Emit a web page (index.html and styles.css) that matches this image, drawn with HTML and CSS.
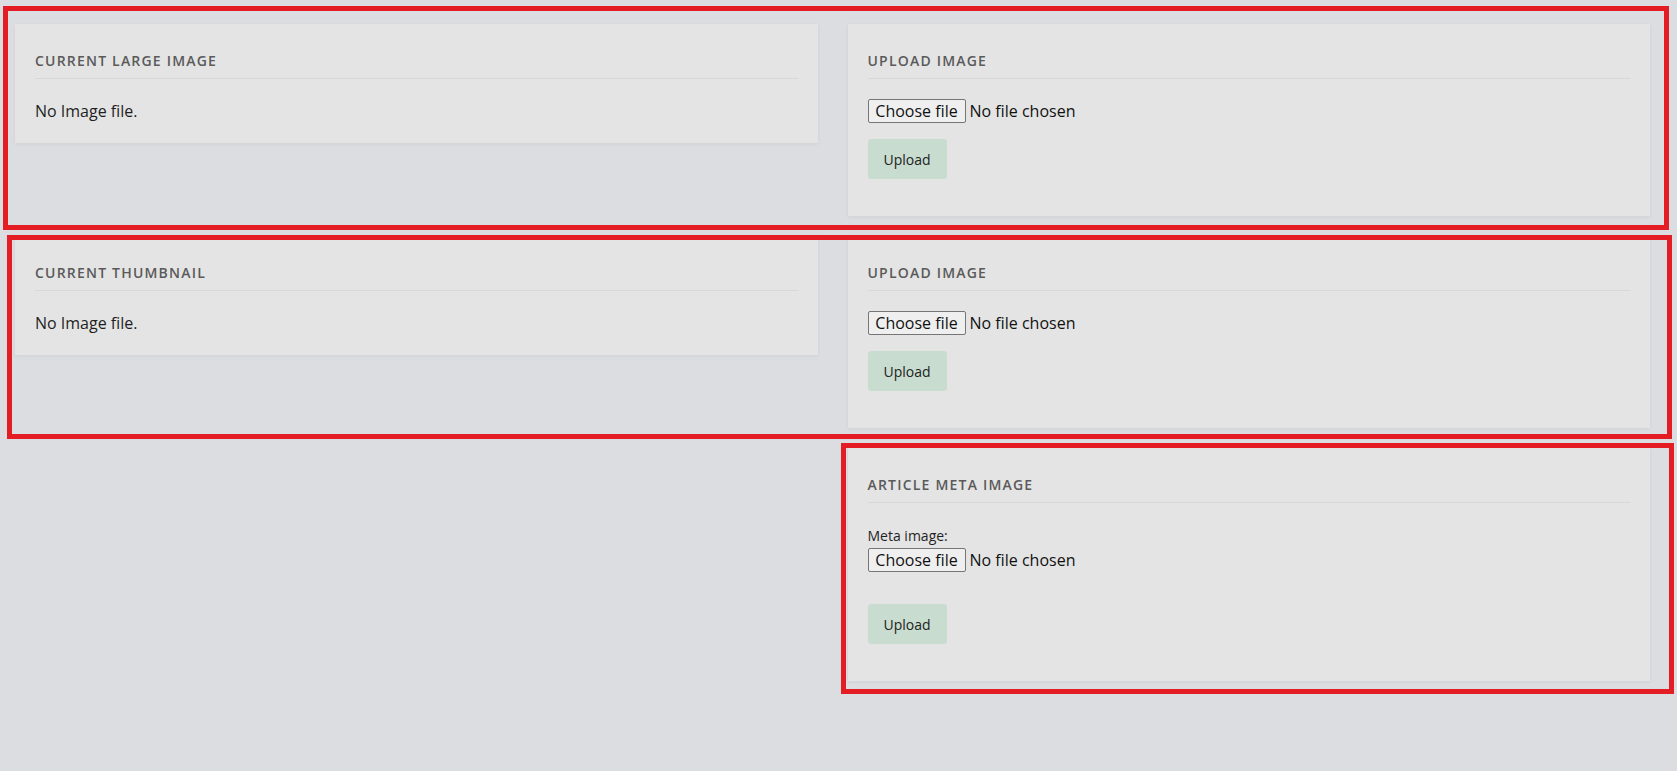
FILE: index.html
```html
<!DOCTYPE html>
<html lang="en">
<head>
<meta charset="utf-8">
<title>Article images</title>
<link rel="stylesheet" href="styles.css">
</head>
<body>
<main class="page">
  <section class="grid">
    <div class="card card-short">
      <h5 class="card-title">Current large image</h5>
      <p class="card-text">No Image file.</p>
    </div>
    <div class="card">
      <h5 class="card-title">Upload image</h5>
      <form class="upload-form">
        <div class="file-input">
          <button type="button" class="file-btn">Choose file</button>
          <span class="file-name">No file chosen</span>
        </div>
        <button type="button" class="btn-upload">Upload</button>
      </form>
    </div>

    <div class="card card-short">
      <h5 class="card-title">Current thumbnail</h5>
      <p class="card-text">No Image file.</p>
    </div>
    <div class="card">
      <h5 class="card-title">Upload image</h5>
      <form class="upload-form">
        <div class="file-input">
          <button type="button" class="file-btn">Choose file</button>
          <span class="file-name">No file chosen</span>
        </div>
        <button type="button" class="btn-upload">Upload</button>
      </form>
    </div>

    <div class="card card-col2">
      <h5 class="card-title">Article meta image</h5>
      <form class="upload-form">
        <div class="form-group">
          <label class="field-label">Meta image:</label>
          <div class="file-input">
            <button type="button" class="file-btn">Choose file</button>
            <span class="file-name">No file chosen</span>
          </div>
        </div>
        <button type="button" class="btn-upload">Upload</button>
      </form>
    </div>
  </section>

  <div class="mark mark-1"></div>
  <div class="mark mark-2"></div>
  <div class="mark mark-3"></div>
</main>
</body>
</html>
```

FILE: styles.css
```css
* { box-sizing: border-box; }

html, body {
  margin: 0;
  padding: 0;
  background: #dcdde1;
}

body {
  font-family: "Open Sans", "Liberation Sans", sans-serif;
  color: #1f1f1f;
  width: 1677px;
  height: 771px;
  overflow: hidden;
}

.page {
  position: relative;
  padding: 24px 27px 0 15px;
}

.grid {
  display: grid;
  grid-template-columns: 1fr 1fr;
  column-gap: 30px;
  row-gap: 20px;
  align-items: start;
}

.card {
  background: #e4e4e4;
  padding: 20px;
  box-shadow: 0 1px 4px rgba(0, 0, 0, 0.06);
}

.card-col2 {
  grid-column: 2;
}

.card-title {
  margin: 0 0 20px;
  padding: 7px 0 7px;
  border-bottom: 1px solid #d8d8d8;
  font-size: 14px;
  line-height: 20px;
  font-weight: 600;
  letter-spacing: 1.2px;
  text-transform: uppercase;
  color: #5a5a5a;
}

.card-text {
  margin: 0;
  font-size: 16px;
  line-height: 24px;
  color: #1f1f1f;
}

.upload-form {
  margin: 0 0 17px;
}

.file-input {
  display: flex;
  align-items: center;
  height: 24px;
  margin-bottom: 16px;
}

.form-group {
  margin-bottom: 32px;
}

.form-group .file-input {
  margin-bottom: 0;
}

.field-label {
  display: block;
  font-size: 14px;
  line-height: 25px;
  color: #1f1f1f;
}

.file-btn {
  height: 24px;
  width: 98px;
  padding: 0;
  margin: 0 4px 0 0;
  font-family: inherit;
  font-size: 16px;
  line-height: 20px;
  color: #111;
  background: #efefef;
  border: 1px solid #767676;
  border-radius: 2px;
}

.file-name {
  font-size: 16px;
  line-height: 24px;
  color: #111;
}

.btn-upload {
  display: block;
  width: 79px;
  height: 40px;
  padding: 0;
  font-family: inherit;
  font-size: 14px;
  color: #222;
  background: #c8ddcf;
  border: none;
  border-radius: 3px;
}

.mark {
  position: absolute;
  border: 5px solid #e31d23;
  pointer-events: none;
}

.mark-1 { left: 3px; top: 6px; width: 1666px; height: 224px; }
.mark-2 { left: 7px; top: 235px; width: 1665px; height: 204px; }
.mark-3 { left: 841px; top: 443px; width: 833px; height: 251px; }
```
